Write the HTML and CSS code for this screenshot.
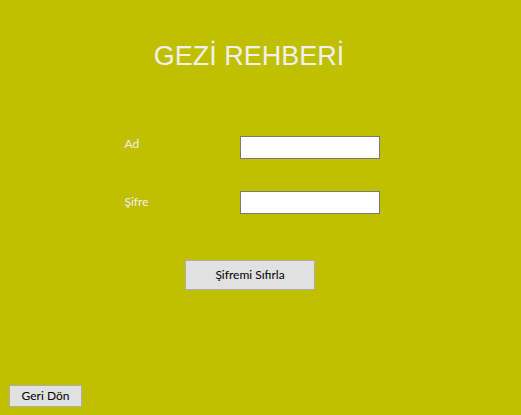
FILE: index.html
```html
<!DOCTYPE html>
<html lang="tr">
<head>
<meta charset="utf-8">
<title>Gezi Rehberi</title>
<link rel="stylesheet" href="styles.css">
</head>
<body>
<main class="page">
  <h1 class="title">GEZİ REHBERİ</h1>
  <form class="form">
    <div class="fields">
      <div class="labels">
        <label for="name">Ad</label>
        <label for="password">Şifre</label>
      </div>
      <div class="inputs">
        <input id="name" type="text">
        <input id="password" type="password">
      </div>
    </div>
    <button class="button reset" type="submit">Şifremi Sıfırla</button>
  </form>
  <button class="button back" type="button">Geri Dön</button>
</main>
</body>
</html>
```

FILE: styles.css
```css
* {
  box-sizing: border-box;
}

body {
  margin: 0;
  background: #c0c000;
  color: #f0f0f0;
  font: 12px/16px Lato, "Noto Sans", sans-serif;
}

.page {
  display: flex;
  flex-direction: column;
  min-height: 100vh;
  padding: 40px 26px 8px 9px;
}

.title {
  margin: 0 6px 0 0;
  font: 27px/32px "Liberation Sans", Arial, sans-serif;
  text-align: center;
}

.form {
  display: flex;
  flex-direction: column;
  align-items: center;
  gap: 46px;
  margin-top: 64px;
}

.fields {
  display: grid;
  grid-template-columns: 115px 140px;
}

.labels,
.inputs {
  display: flex;
  flex-direction: column;
}

.labels {
  gap: 42px;
}

.inputs {
  gap: 32px;
}

.inputs input {
  width: 100%;
  height: 23px;
  padding: 2px 4px;
  border: 1px solid #7a7a7a;
  border-radius: 0;
  background: #fff;
  font: inherit;
}

.button {
  padding: 0;
  border: 1px solid #adadad;
  background: #e1e1e1;
  color: #000;
  font: inherit;
}

.reset {
  width: 130px;
  height: 30px;
  margin-right: 4px;
}

.back {
  width: 73px;
  height: 22px;
  margin-top: auto;
}
```
